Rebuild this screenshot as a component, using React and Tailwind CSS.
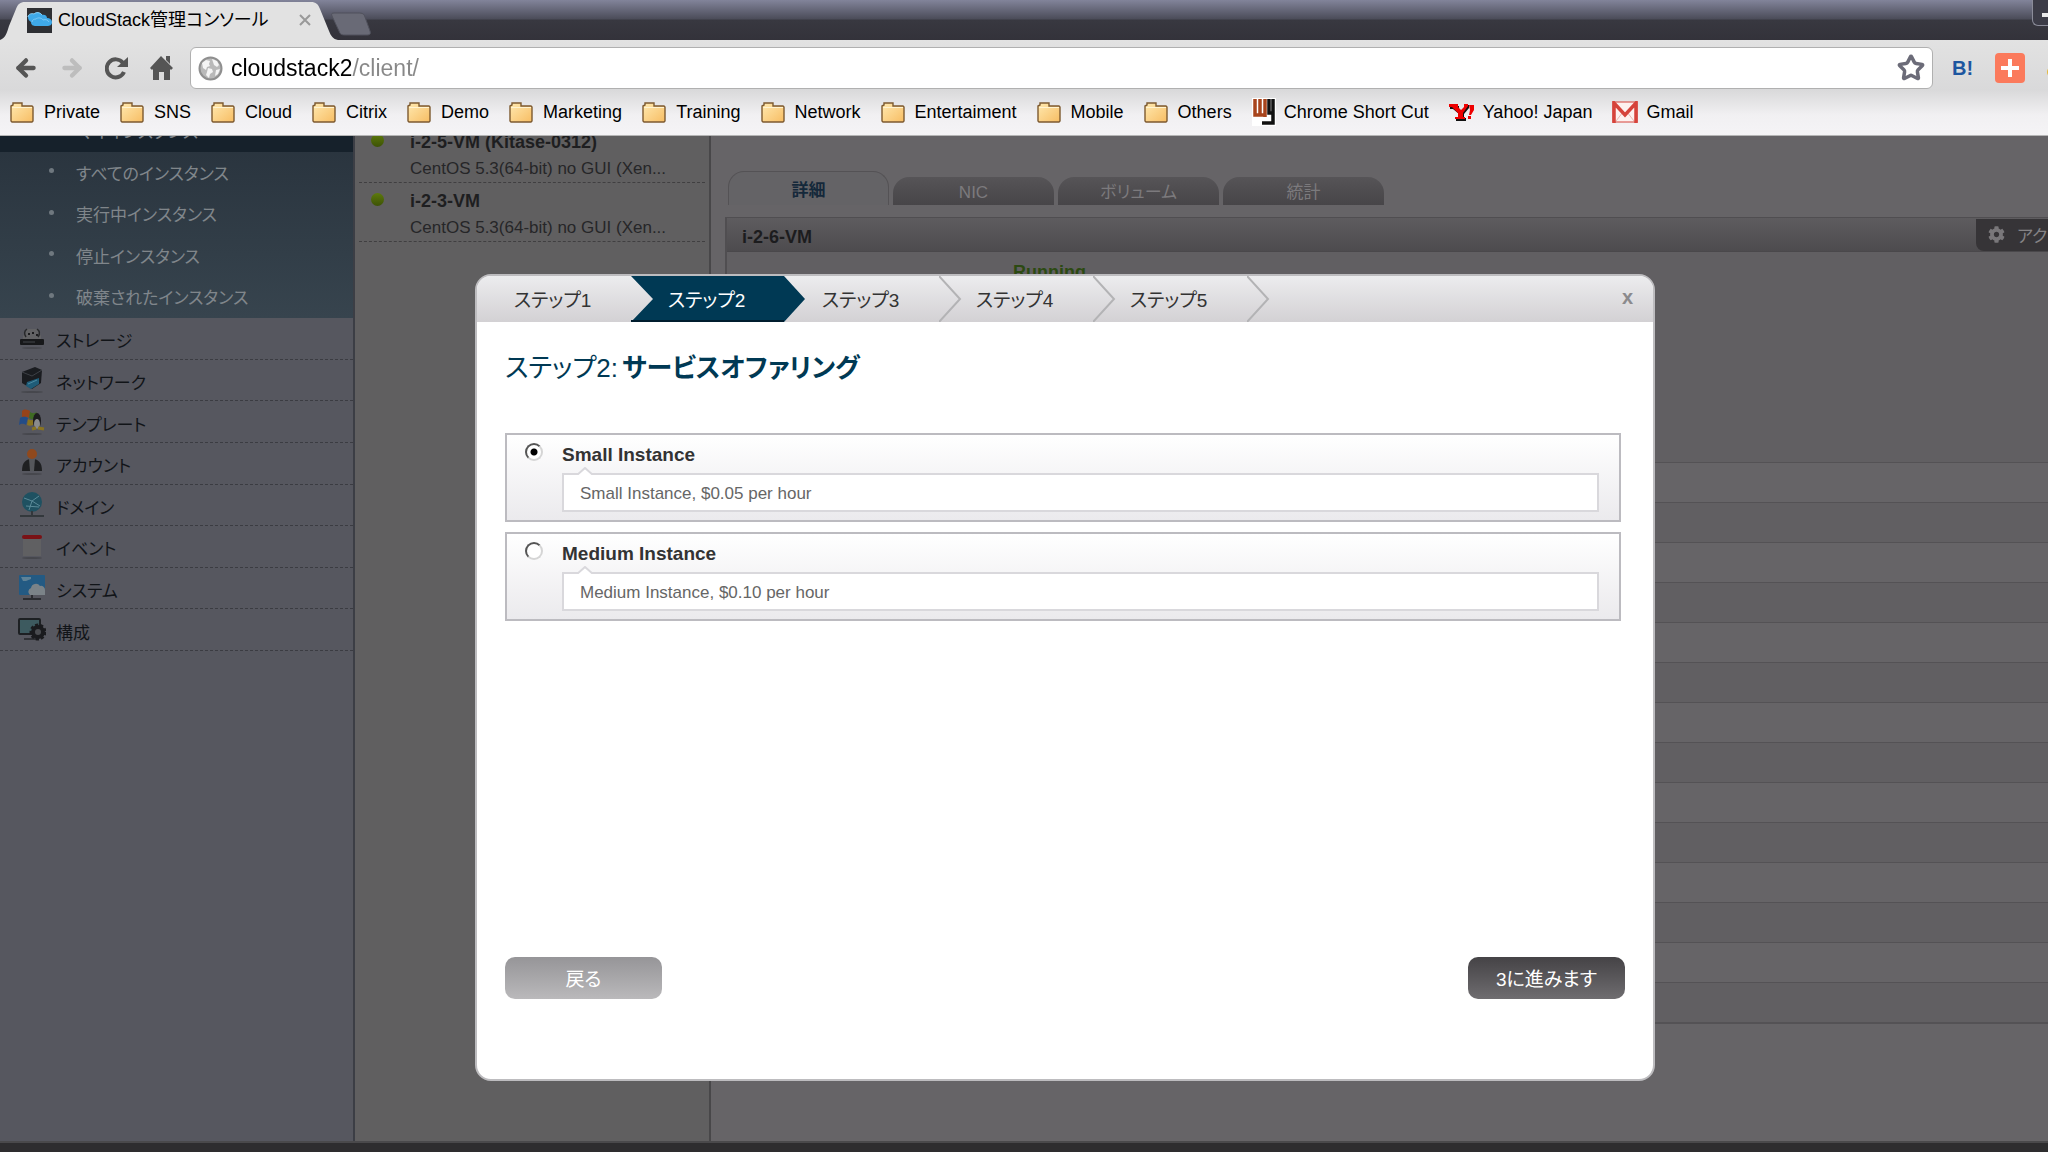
import { useState } from 'react';
import { ArrowLeft, ArrowRight, Star } from 'lucide-react';
import { FaCog } from 'react-icons/fa';

const BOOKMARK_FOLDERS = [
  'Private', 'SNS', 'Cloud', 'Citrix', 'Demo', 'Marketing',
  'Training', 'Network', 'Entertaiment', 'Mobile', 'Others',
];

const INSTANCE_FILTERS = [
  'すべてのインスタンス',
  '実行中インスタンス',
  '停止インスタンス',
  '破棄されたインスタンス',
];

const NAV_ITEMS = [
  { label: 'ストレージ', Icon: StorageIcon },
  { label: 'ネットワーク', Icon: NetworkIcon },
  { label: 'テンプレート', Icon: TemplateIcon },
  { label: 'アカウント', Icon: AccountIcon },
  { label: 'ドメイン', Icon: DomainIcon },
  { label: 'イベント', Icon: EventIcon },
  { label: 'システム', Icon: SystemIcon },
  { label: '構成', Icon: ConfigIcon },
];

const VMS = [
  { name: 'i-2-5-VM (Kitase-0312)', os: 'CentOS 5.3(64-bit) no GUI (Xen...' },
  { name: 'i-2-3-VM', os: 'CentOS 5.3(64-bit) no GUI (Xen...' },
];

const STEPS = [1, 2, 3, 4, 5];

const OFFERINGS = [
  { id: 'small', name: 'Small Instance', desc: 'Small Instance, $0.05 per hour' },
  { id: 'medium', name: 'Medium Instance', desc: 'Medium Instance, $0.10 per hour' },
];

/* ---------- icons ---------- */

function FolderIcon() {
  return (
    <svg className="w-6 h-[21px] shrink-0" viewBox="0 0 24 21">
      <defs>
        <linearGradient id="folder" x1="0" y1="0" x2="1" y2="1">
          <stop offset="0" stopColor="#ffe9b0" />
          <stop offset="1" stopColor="#f7bd63" />
        </linearGradient>
      </defs>
      <path d="M1 19V4l2-1V1h9v3h10l1 1v14l-1 1H2z" fill="url(#folder)" stroke="#7d5a30" strokeWidth="1.4" />
      <path d="M2 5.5h20" stroke="#fff3d0" />
    </svg>
  );
}

function CloudFavicon() {
  return (
    <svg className="w-[25px] h-[25px] shrink-0" viewBox="0 0 25 25">
      <rect width="25" height="25" fill="#2e2f33" />
      <path d="M1 9c0-3 4-4 6-3 2-2 6-2 8 1 3-1 5 1 5 3 3 0 5 2 5 4 0 3-2 4-5 4H9c-3 0-5-1-5-4-2-1-3-3-3-5z" fill="#3fa9e8" />
      <path d="M1 9c0-3 4-4 6-3 2-2 6-2 8 1" fill="none" stroke="#8fd3f8" />
      <path d="M5 14c0-2 2-3 4-3 2-2 6-1 7 1 3-1 5 0 6 2" fill="none" stroke="#7cc8f4" />
    </svg>
  );
}

function ReloadIcon() {
  return (
    <svg className="w-6 h-6" viewBox="0 0 24 24">
      <path d="M19 16a9 9 0 1 1-1-9" fill="none" stroke="#555" strokeWidth="4" />
      <path d="M23 1v10H12z" fill="#555" />
    </svg>
  );
}

function HomeIcon() {
  return (
    <svg className="w-6 h-6" viewBox="0 0 24 24" fill="#555">
      <path d="M12 0l12 12-2 2-1-1v11h-6v-8h-5v8H4V13l-1 1-2-2z" />
      <path d="M17 0h4v8l-4-4z" />
    </svg>
  );
}

function GlobeIcon() {
  return (
    <svg className="w-[25px] h-[25px] shrink-0" viewBox="0 0 25 25">
      <circle cx="12.500" cy="12.500" r="11" fill="#b9b9b9" stroke="#8f8f8f" strokeWidth="2" />
      <path d="M4 7l4-3 4 1-1 3 1 2-3 1-1 3-3-2zM14 3l5 2 2 4-2 2-3-2-1-3zM10 12l4 1 1 3-3 2-1 4-3-3 1-3zM18 14l4-1-2 5-3 2z" fill="#f4f4f4" />
    </svg>
  );
}

function ShortCutIcon() {
  return (
    <svg className="w-6 h-7 shrink-0" viewBox="0 0 24 28" fill="none">
      <rect width="24" height="28" fill="#fff" />
      <path d="M3 1v16h10M8 1v16M13 1v18" stroke="#a8441c" strokeWidth="3.500" />
      <path d="M17 1v14h4M21 1v24H10" stroke="#111" strokeWidth="3.500" />
    </svg>
  );
}

function YahooIcon() {
  return (
    <svg className="w-[26px] h-[18px] shrink-0" viewBox="0 0 26 18">
      <path d="M1 3h9v3l3 2 3-3V2h4v3l-5 6v4h2v3H7v-3h3v-4L4 6H1z" fill="#111" />
      <path d="M0 1h9v3l3 3 3-3V1h4v2l-5 7v4h2v2H6v-2h3v-4L3 4H0z" fill="#e00" />
      <path d="M20 2h5v5l-3 5h-2l1-5zM19 13h3v3h-3z" fill="#e00" />
    </svg>
  );
}

function GmailIcon() {
  return (
    <svg className="w-[26px] h-[22px] shrink-0" viewBox="0 0 26 22">
      <rect x="1" y="1" width="24" height="20" fill="#fdf1ef" stroke="#d6433b" />
      <path d="M4 20l7-9M22 20l-7-9" stroke="#e8b8b3" />
      <path d="M2 22V2l11 12L24 2v20" fill="none" stroke="#d6433b" strokeWidth="3.500" />
    </svg>
  );
}

function StorageIcon() {
  return (
    <svg className="w-7 h-7" viewBox="0 0 28 28">
      <path d="M5 12l4-7h10l4 7v4H5z" fill="#626264" />
      <path d="M9 5c-3 2-3 5-1 8M19 5c3 2 3 5 1 8" stroke="#28292b" fill="none" strokeWidth="1.500" />
      <path d="M10 10h2M14 9h2M18 11h2" stroke="#1c1c1e" strokeWidth="2" />
      <rect x="2" y="15" width="24" height="6" rx="1" fill="#17181a" />
      <path d="M5 18h12" stroke="#44464a" />
      <ellipse cx="14" cy="24" rx="10" ry="1" fill="#48494f" />
    </svg>
  );
}

function NetworkIcon() {
  return (
    <svg className="w-7 h-7" viewBox="0 0 28 28">
      <path d="M4 6l13-5 7 3-1 13-9 6-10-6z" fill="#1a1c20" />
      <path d="M4 6l10 4 10-6" stroke="#3d4046" fill="none" />
      <path d="M9 16l12-4v6l-8 5-5-3z" fill="#1f5c78" />
      <path d="M10 18l9-4" stroke="#4b8ba3" />
      <ellipse cx="14" cy="26" rx="11" ry="1" fill="#46474d" />
    </svg>
  );
}

function TemplateIcon() {
  return (
    <svg className="w-7 h-7" viewBox="0 0 28 28">
      <path d="M4 3c3-3 6-1 8 0l-1 7c-3-2-5-1-7 0z" fill="#96431a" />
      <path d="M12 4c3 2 5 1 7 0l-2 7c-2 1-4 0-6-1z" fill="#3f6b23" />
      <path d="M2 10c3-2 6-1 8 0l-2 7c-3-2-5-1-7 0z" fill="#234c87" />
      <path d="M10 11c3 2 5 1 7 0l-2 6c-2 1-4 1-6 0z" fill="#8a7420" />
      <ellipse cx="19" cy="13" rx="4" ry="8" fill="#1c1c1e" />
      <ellipse cx="19" cy="16" rx="3" ry="5" fill="#8b8b8b" />
      <path d="M14 21l4-1M20 20l6 1" stroke="#8a7420" strokeWidth="3" />
      <ellipse cx="14" cy="26" rx="10" ry="1" fill="#46474d" />
    </svg>
  );
}

function AccountIcon() {
  return (
    <svg className="w-7 h-7" viewBox="0 0 28 28">
      <circle cx="14" cy="5" r="5" fill="#90491d" />
      <path d="M4 22c0-9 4-12 10-12s10 3 10 12z" fill="#1f2022" />
      <path d="M11 10h6l-1 12h-4z" fill="#55575b" />
      <ellipse cx="14" cy="25" rx="10" ry="1" fill="#46474d" />
    </svg>
  );
}

function DomainIcon() {
  return (
    <svg className="w-7 h-7" viewBox="0 0 28 28">
      <circle cx="14" cy="11" r="10" fill="#1f5161" />
      <path d="M6 7l8 3 7-5M14 10l-3 9M14 10l8 5M8 15l13 1" stroke="#5a8a98" fill="none" />
      <path d="M14 20v4M2 25h24" stroke="#33383c" strokeWidth="2" />
    </svg>
  );
}

function EventIcon() {
  return (
    <svg className="w-7 h-7" viewBox="0 0 28 28">
      <rect x="5" y="5" width="18" height="19" fill="#606062" />
      <rect x="4" y="3" width="20" height="4" rx="2" fill="#7a1216" />
      <ellipse cx="14" cy="26" rx="10" ry="1" fill="#46474d" />
    </svg>
  );
}

function SystemIcon() {
  return (
    <svg className="w-7 h-7" viewBox="0 0 28 28">
      <rect x="1" y="1" width="26" height="20" rx="1" fill="#235a83" />
      <path d="M3 3h10v2l-5 2H5z" fill="#5f8297" />
      <path d="M12 21a4 4 0 0 1 1-7 5 5 0 0 1 9-2 4 4 0 0 1 5 4v5z" fill="#7b8388" />
      <path d="M14 21v3M5 25h18" stroke="#2b2d31" strokeWidth="2" />
    </svg>
  );
}

function ConfigIcon() {
  return (
    <svg className="w-7 h-7" viewBox="0 0 28 28">
      <rect x="1" y="3" width="21" height="15" rx="1" fill="#3d5a5f" stroke="#1d2023" strokeWidth="2" />
      <path d="M6 23h12" stroke="#303236" strokeWidth="2" />
      <circle cx="20" cy="16" r="5" fill="#4a4c50" stroke="#1a1b1e" strokeWidth="4" />
      <circle cx="20" cy="16" r="7" fill="none" stroke="#1a1b1e" strokeWidth="3" strokeDasharray="3 2" />
    </svg>
  );
}

/* ---------- browser chrome ---------- */

function TitleBar() {
  return (
    <div className="flex h-10 items-start justify-between overflow-hidden bg-[linear-gradient(#82849a,#4b4c59_19px,#383840_20px,#33323a)]">
      <div className="flex">
        <div className="relative flex h-10 w-[331px] items-center pl-[27px] pr-4">
          <svg className="absolute left-0 top-0 h-10 w-[338px] max-w-none" viewBox="0 0 338 40">
            <path d="M0 40c6-2 7-8 9-14l7-17c2-5 4-7 9-7h286c5 0 7 2 9 7l9 22c2 5 4 8 9 9z" fill="#e2e2e2" />
          </svg>
          <div className="relative flex flex-1 items-center gap-[6px]">
            <CloudFavicon />
            <span className="flex-1 whitespace-nowrap text-lg leading-6 text-black">CloudStack管理コンソール</span>
            <button type="button" aria-label="タブを閉じる" className="p-1">
              <svg className="h-3 w-3" viewBox="0 0 12 12">
                <path d="M1 1l10 10M11 1L1 11" stroke="#999" strokeWidth="2" />
              </svg>
            </button>
          </div>
        </div>
        <button type="button" aria-label="新しいタブ" className="pt-2">
          <svg className="h-6 w-10" viewBox="0 0 40 24">
            <path d="M3 1h24c5 0 6 1 7 4l5 14c1 3 0 4-3 4H14c-4 0-5-1-6-4L1 4C0 2 1 1 3 1z" fill="#696a76" stroke="#50515c" />
          </svg>
        </button>
      </div>
      <button type="button" aria-label="最小化" className="flex h-[26px] w-4 items-center justify-end rounded-bl-md border-b border-l border-[#8b8c99] bg-[#3c3c47] pt-1">
        <span className="h-1 w-[6px] bg-[#e8e8e8]" />
      </button>
    </div>
  );
}

function Toolbar() {
  const [url, setUrl] = useState('cloudstack2/client/');
  return (
    <div className="flex h-14 items-center pl-[13px]">
      <div className="flex w-[177px] items-center gap-5">
        <button type="button" aria-label="戻る"><ArrowLeft size={26} strokeWidth={4} color="#555" /></button>
        <button type="button" aria-label="進む"><ArrowRight size={26} strokeWidth={4} color="#bdbdbd" /></button>
        <button type="button" aria-label="再読み込み"><ReloadIcon /></button>
        <button type="button" aria-label="ホーム"><HomeIcon /></button>
      </div>
      <div className="flex h-[42px] flex-1 items-center gap-2 rounded-md border border-[#b0b0b0] bg-white px-[7px]">
        <GlobeIcon />
        <input
          type="text"
          aria-label="アドレス"
          value={url}
          onChange={e => setUrl(e.target.value)}
          className="h-8 flex-1 bg-[linear-gradient(90deg,#000_120px,#888_120px)] bg-clip-text text-[23px] text-transparent outline-none"
        />
        <button type="button" aria-label="ブックマーク"><Star size={28} strokeWidth={3} color="#6b6b78" /></button>
      </div>
      <div className="flex w-[115px] items-center gap-[22px] overflow-hidden pl-[19px]">
        <button type="button" className="text-xl font-bold text-[#1d56a0]">B!</button>
        <button type="button" aria-label="追加" className="flex h-[30px] w-[30px] shrink-0 items-center justify-center rounded-sm bg-[#fb7a5c]">
          <svg className="h-[18px] w-[18px]" viewBox="0 0 18 18">
            <path d="M9 0v18M0 9h18" stroke="#fff" strokeWidth="4" />
          </svg>
        </button>
        <button type="button" aria-label="拡張機能" className="mt-2 h-3 w-3 shrink-0 rounded-full bg-[#e5b93c]" />
      </div>
    </div>
  );
}

function BookmarkBar() {
  return (
    <nav className="flex h-10 items-center gap-5 whitespace-nowrap border-b border-[#b5b5b5] pb-[7px] pl-[10px] text-lg leading-6 text-black">
      {BOOKMARK_FOLDERS.map(name => (
        <button key={name} type="button" className="flex items-center gap-[10px]">
          <FolderIcon />
          {name}
        </button>
      ))}
      <a href="#shortcut" className="flex items-center gap-2"><ShortCutIcon />Chrome Short Cut</a>
      <a href="#yahoo" className="flex items-center gap-2"><YahooIcon />Yahoo! Japan</a>
      <a href="#gmail" className="flex items-center gap-2"><GmailIcon />Gmail</a>
    </nav>
  );
}

/* ---------- console ---------- */

function Sidebar() {
  return (
    <aside className="w-[355px] shrink-0 border-r-2 border-[#3c3e45] bg-[#56575f]">
      <ul className="-mt-[26px] bg-linear-to-b from-[#27313b] to-[#37444e] text-[17px] leading-6 text-[#80868b]">
        <li className="flex h-[42px] items-center bg-[#16212b] pl-[78px] pt-1">
          <a href="#mine">マイインスタンス</a>
        </li>
        <li>
          <ul className="grid h-[166px] grid-rows-4">
            {INSTANCE_FILTERS.map(name => (
              <li key={name} className="flex items-center pl-[49px] pt-1">
                <span className="mb-2 mr-[22px] h-[5px] w-[5px] rounded-full bg-[#6f787f]" />
                <a href="#instances">{name}</a>
              </li>
            ))}
          </ul>
        </li>
      </ul>
      <ul className="grid h-[333px] grid-rows-8 text-[17px] leading-6 text-[#111418]">
        {NAV_ITEMS.map(({ label, Icon }) => (
          <li key={label} className="border-b border-dashed border-[#3b3c42]">
            <a href="#nav" className="flex h-full items-center gap-[10px] pl-[18px]">
              <Icon />
              <span className="pt-2">{label}</span>
            </a>
          </li>
        ))}
      </ul>
    </aside>
  );
}

function VmList() {
  return (
    <section className="w-[356px] shrink-0 border-r-2 border-[#484749] bg-[#605f60]">
      <ul className="-mt-3">
        {VMS.map(vm => (
          <li key={vm.name} className="mx-1 flex h-[59px] border-b border-dashed border-[#403f41] pl-3">
            <span className="mr-[26px] mt-[10px] h-[13px] w-[13px] shrink-0 rounded-full bg-linear-to-b from-[#5d7a0c] to-[#3d5206]" />
            <div className="pt-[6px]">
              <p className="text-lg font-bold leading-6 text-[#1e1e20]">{vm.name}</p>
              <p className="mt-[3px] whitespace-nowrap text-[17px] leading-6 text-[#262628]">{vm.os}</p>
            </div>
          </li>
        ))}
      </ul>
    </section>
  );
}

function DetailPanel() {
  return (
    <section className="min-w-0 flex-1 bg-[#666467] pl-[14px] pt-[35px]">
      <div className="flex items-end gap-1 pl-[3px] text-[17px] leading-6 text-[#7c7a7d]">
        <button type="button" className="h-[34px] w-[161px] rounded-t-2xl border border-b-0 border-[#545255] bg-[#646366] pt-1 font-bold text-[#14283a]">詳細</button>
        {['NIC', 'ボリューム', '統計'].map(tab => (
          <button key={tab} type="button" className="h-7 w-[161px] rounded-t-2xl bg-linear-to-b from-[#565457] to-[#474548] pt-1">{tab}</button>
        ))}
      </div>
      <div className="mt-3 border-l-2 border-t border-[#504e51] bg-[#615f62]">
        <div className="flex h-[34px] items-center justify-between border-b border-[#4a484b] bg-linear-to-b from-[#5e5c5f] to-[#4d4b4e] pl-[15px]">
          <h2 className="pt-1 text-lg font-bold leading-6 text-[#1c1c1e]">i-2-6-VM</h2>
          <button type="button" className="flex h-8 w-[72px] items-center gap-3 overflow-hidden whitespace-nowrap rounded-bl-lg bg-[#363437] pl-3 text-[17px] text-[#858386]">
            <FaCog size={17} className="shrink-0 text-[#79777a]" />
            <span className="pt-1">アクション</span>
          </button>
        </div>
        <p className="h-[210px] pl-[286px] pt-2 text-lg font-bold leading-6 text-[#2c4a12]">Running</p>
        <ul>
          {Array.from({ length: 14 }, (_, i) => (
            <li key={i} className="h-10 border-t border-[#545255] odd:bg-[#666467]" />
          ))}
        </ul>
      </div>
      <div className="border-t-2 border-[#545255]" />
    </section>
  );
}

function WizardSteps({ current }) {
  return (
    <ol className="flex">
      {STEPS.map(n => (
        <li
          key={n}
          aria-current={n === current ? 'step' : undefined}
          className="relative flex h-[46px] w-[154px] items-center pl-[37px] pt-[3px] text-[19px] leading-6 text-[#333]"
        >
          {n === current && (
            <svg className="absolute left-0 top-0 h-[46px] w-[175px] max-w-none" viewBox="0 0 175 46">
              <path d="M0 0h153l21 23-21 23H0l22-23z" fill="#003954" />
              <path d="M0 45h153" stroke="#001d2e" strokeWidth="2" />
            </svg>
          )}
          {n > current && (
            <svg className="absolute left-full top-0 h-[46px] w-[23px]" viewBox="0 0 23 46">
              <path d="M0 0l21 23L0 46" fill="none" stroke="#b3b3b5" strokeWidth="2" />
            </svg>
          )}
          <span className={n === current ? 'relative text-white' : 'relative'}>ステップ{n}</span>
        </li>
      ))}
    </ol>
  );
}

function OfferingOption({ offering, checked, onSelect }) {
  return (
    <div className="flex h-[89px] border-2 border-[#bcbbc0] bg-linear-to-b from-white to-[#ebeaed] pl-[18px] pr-5">
      <input
        type="radio"
        id={offering.id}
        name="offering"
        checked={checked}
        onChange={onSelect}
        className="mt-2 h-[18px] w-[18px] shrink-0 appearance-none rounded-full border-2 border-b-[#d5d5d5] border-l-[#555] border-r-[#d5d5d5] border-t-[#555] bg-white checked:bg-[radial-gradient(circle,#000_3px,transparent_4px)]"
      />
      <div className="ml-[19px] flex-1">
        <label htmlFor={offering.id} className="mt-2 block text-[19px] font-bold leading-6 text-[#333]">{offering.name}</label>
        <div className="relative mt-[6px] flex h-[39px] items-center border-2 border-[#d9d8dc] bg-white pl-4 pt-[2px] text-[17px] leading-6 text-[#666]">
          <svg className="absolute -top-2 left-[13px] h-2 w-4" viewBox="0 0 16 8">
            <path d="M0 8l8-7 8 7z" fill="#fff" />
            <path d="M0 8l8-7 8 7" fill="none" stroke="#d9d8dc" strokeWidth="2" />
          </svg>
          {offering.desc}
        </div>
      </div>
    </div>
  );
}

function InstanceWizard() {
  const [selected, setSelected] = useState('small');
  return (
    <div role="dialog" aria-labelledby="wizard-title" className="absolute left-[475px] top-[138px] flex min-h-[807px] w-[1180px] flex-col overflow-hidden rounded-2xl border-2 border-[#bdbcbf] bg-white">
      <div className="flex h-[46px] justify-between bg-linear-to-b from-[#ececee] to-[#d3d1d4]">
        <WizardSteps current={2} />
        <button type="button" className="pb-1 pr-5 text-xl font-bold text-[#8b8a8d]">x</button>
      </div>
      <div className="flex flex-1 flex-col pb-20 pl-7 pr-7 pt-[30px]">
        <h1 id="wizard-title" className="text-[26px] leading-8 text-[#003954]">
          ステップ2:<strong className="ml-1 font-bold">サービスオファリング</strong>
        </h1>
        <div className="mt-[49px] flex flex-col gap-[10px] pr-1">
          {OFFERINGS.map(o => (
            <OfferingOption key={o.id} offering={o} checked={selected === o.id} onSelect={() => setSelected(o.id)} />
          ))}
        </div>
        <div className="mt-auto flex justify-between text-[19px] leading-6 text-white">
          <button type="button" className="h-[42px] w-[157px] rounded-[10px] bg-linear-to-b from-[#969598] to-[#bab9bb] pt-1">戻る</button>
          <button type="button" className="h-[42px] w-[157px] rounded-[10px] bg-linear-to-b from-[#454346] to-[#6f6d70] pt-1">3に進みます</button>
        </div>
      </div>
    </div>
  );
}

export default function App() {
  return (
    <div className="flex h-screen flex-col overflow-hidden font-['Liberation_Sans','Noto_Sans_CJK_JP',sans-serif] [font-feature-settings:'palt']">
      <header>
        <TitleBar />
        <div className="bg-[linear-gradient(#e2e2e2,#d9d9da_50px,#f1f0f2_75px,#f5f4f6)]">
          <Toolbar />
          <BookmarkBar />
        </div>
      </header>
      <main className="relative flex min-h-0 flex-1 overflow-hidden">
        <Sidebar />
        <VmList />
        <DetailPanel />
        <InstanceWizard />
      </main>
      <footer className="h-[11px] shrink-0 border-t-2 border-[#4a494b] bg-[#2e2d2f]" />
    </div>
  );
}
